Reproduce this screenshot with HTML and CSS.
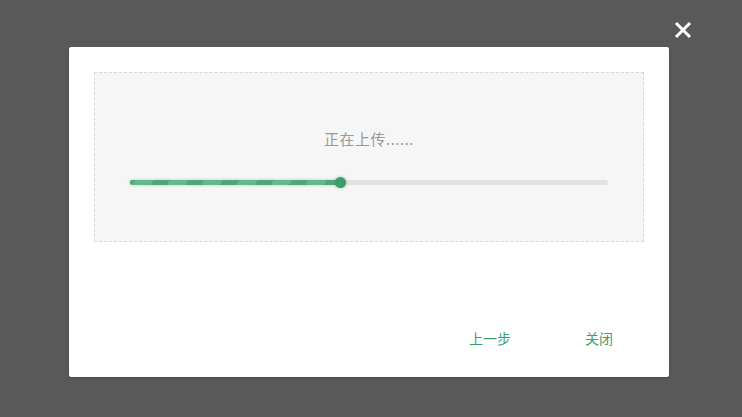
FILE: index.html
```html
<!DOCTYPE html>
<html lang="zh-CN">
<head>
    <meta charset="UTF-8">
    <meta name="viewport" content="width=device-width, initial-scale=1.0">
    <title>上传</title>
    <link rel="stylesheet" href="styles.css">
</head>
<body>
    <button class="close-x" aria-label="关闭">
        <svg width="18" height="18" viewBox="0 0 18 18">
            <path d="M2 2 L16 16 M16 2 L2 16" stroke="#fff" stroke-width="3" stroke-linecap="butt"/>
        </svg>
    </button>

    <div class="overlay">
        <div class="modal">
            <div class="upload-box">
                <p class="upload-text">正在上传......</p>
                <div class="progress">
                    <div class="progress-fill" style="width: 210px;">
                        <span class="progress-knob"></span>
                    </div>
                </div>
            </div>

            <div class="modal-footer">
                <button class="btn-link">上一步</button>
                <button class="btn-link">关闭</button>
            </div>
        </div>
    </div>
</body>
</html>
```

FILE: styles.css
```css
* {
    margin: 0;
    padding: 0;
    box-sizing: border-box;
}

body {
    font-family: "Microsoft YaHei", "Noto Sans CJK SC", "Noto Sans", sans-serif;
    background-color: #595959;
    width: 742px;
    height: 417px;
    overflow: hidden;
}

.overlay {
    padding: 47px 0 0 69px;
}

.modal {
    width: 600px;
    height: 330px;
    background-color: #fff;
    border-radius: 2px;
    padding: 25px 25px 0;
    box-shadow: 0 1px 3px rgba(0, 0, 0, 0.2);
}

.upload-box {
    height: 170px;
    background-color: #f6f6f6;
    border: 1px dashed #d8d8d8;
    padding: 55px 35px 0;
}

.upload-text {
    text-align: center;
    font-size: 15px;
    line-height: 22px;
    color: #999;
    letter-spacing: 0.5px;
}

.progress {
    margin-top: 30px;
    height: 5px;
    background-color: #e2e2e2;
    border-radius: 3px;
    position: relative;
}

.progress-fill {
    height: 100%;
    border-radius: 3px;
    background-color: #62b98a;
    background-image: repeating-linear-gradient(
        -60deg,
        rgba(0, 80, 40, 0.18) 0,
        rgba(0, 80, 40, 0.18) 14px,
        transparent 14px,
        transparent 30px
    );
    box-shadow: 0 0 3px rgba(79, 174, 124, 0.5);
    position: relative;
}

.progress-knob {
    position: absolute;
    right: -6px;
    top: -3px;
    width: 11px;
    height: 11px;
    border-radius: 50%;
    background-color: #3a9d6b;
    box-shadow: 0 0 3px rgba(58, 157, 107, 0.6);
}

.modal-footer {
    display: flex;
    justify-content: flex-end;
    gap: 29px;
    margin-top: 80px;
    padding-right: 5px;
}

.btn-link {
    width: 80px;
    height: 32px;
    border: none;
    background: none;
    font-family: inherit;
    font-size: 14px;
    color: #3f9e6d;
    cursor: pointer;
}

.close-x {
    position: absolute;
    left: 674px;
    top: 21px;
    width: 18px;
    height: 18px;
    border: none;
    background: none;
    cursor: pointer;
}
```
